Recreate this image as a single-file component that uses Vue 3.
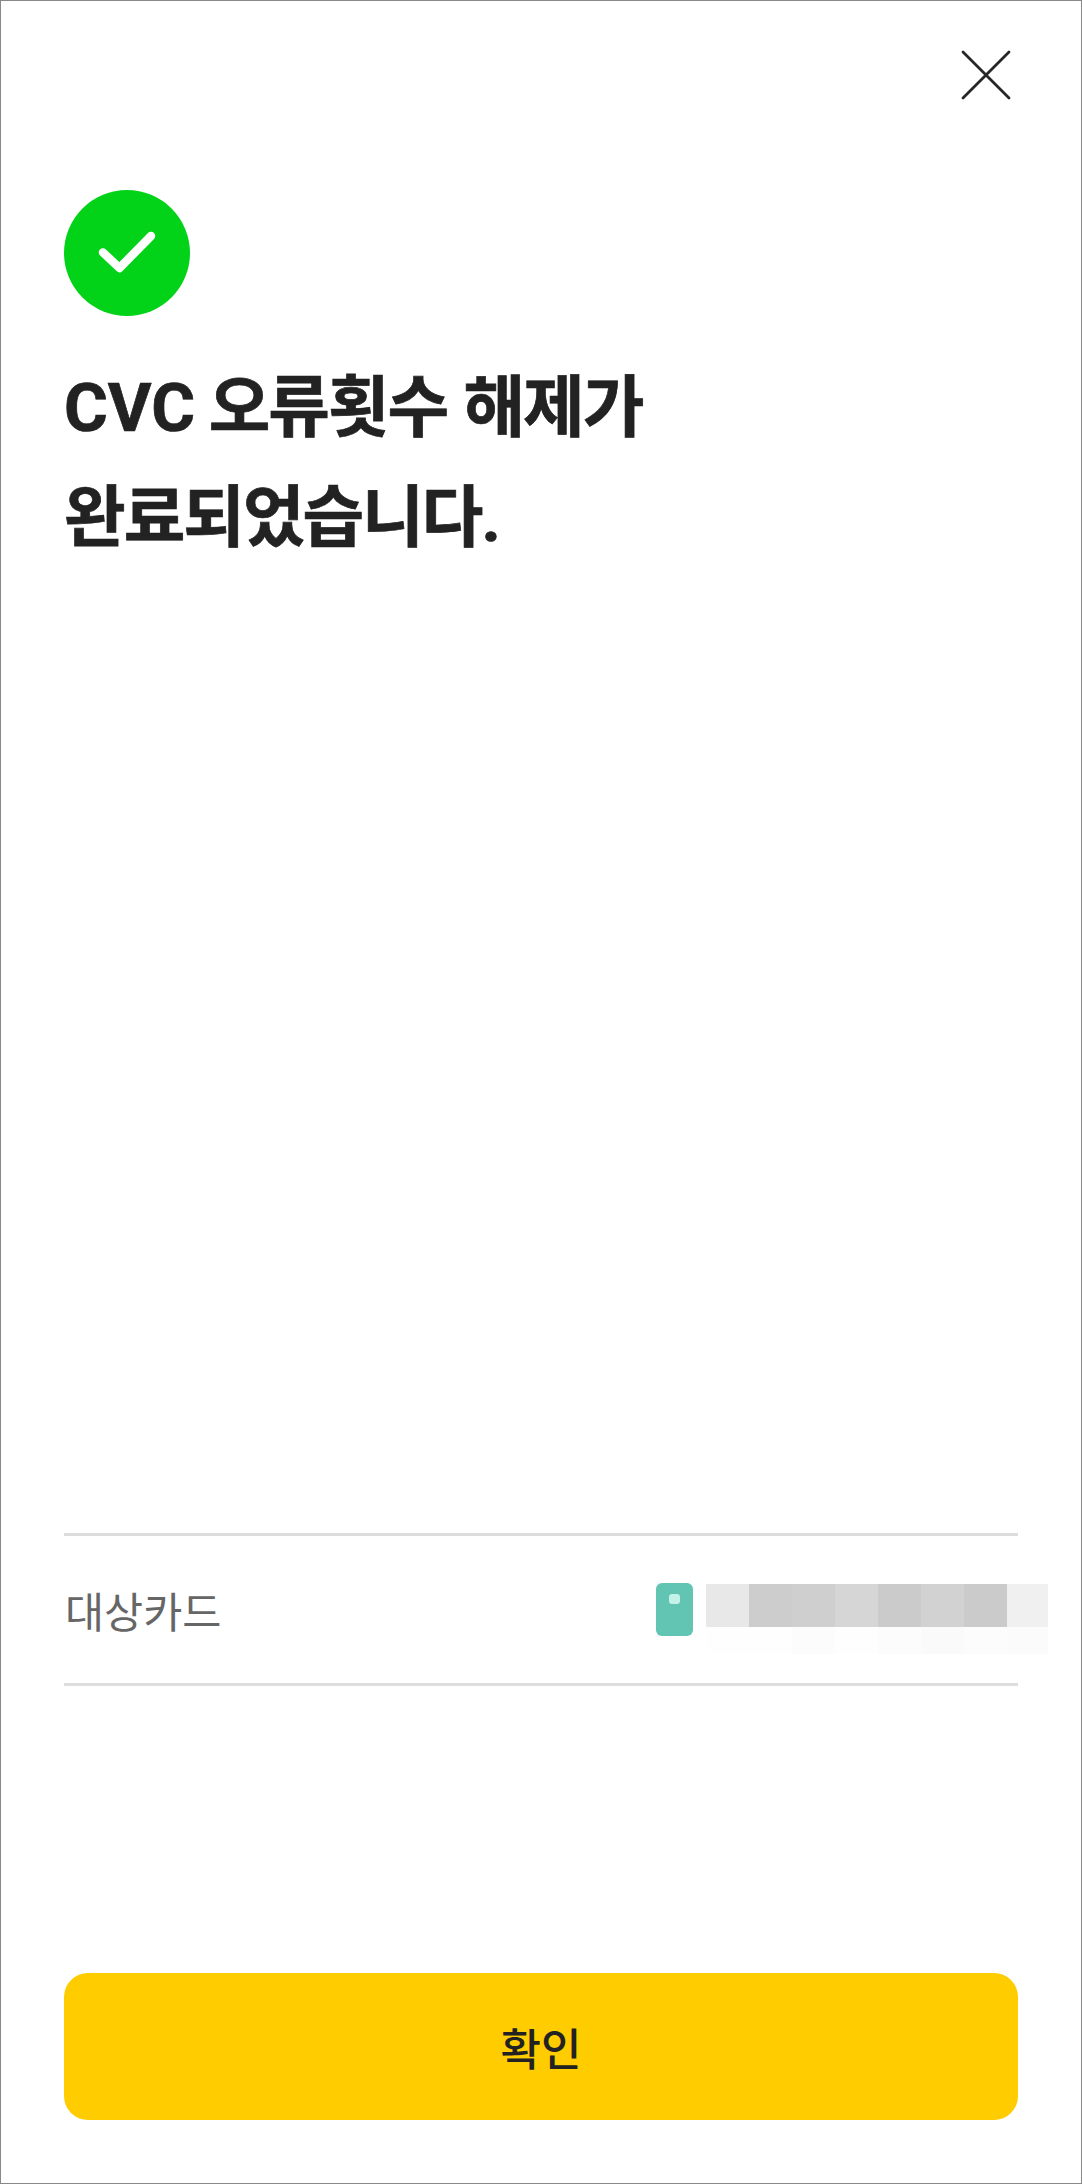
<script setup>
const topCells = ['#e8e8e8', '#cdcdcd', '#cfcfcf', '#d6d6d6', '#cbcbcb', '#d2d2d2', '#cbcbcb', '#f0f0f0']
const bottomCells = ['#fefefe', '#fefefe', '#fcfcfc', '#fefefe', '#fcfcfc', '#fafafa', '#fcfcfc', '#fbfbfb']
</script>

<template>
  <div class="page">
    <header class="top">
      <svg class="close" width="50" height="50" viewBox="0 0 50 50" aria-label="닫기">
        <path d="M2 2 L48 48 M48 2 L2 48" stroke="#262626" stroke-width="2.8" stroke-linecap="round" fill="none" />
      </svg>
    </header>

    <div class="status">
      <svg width="126" height="126" viewBox="0 0 126 126">
        <circle cx="63" cy="63" r="63" fill="#03d318" />
        <path d="M39 62.500 L55.500 78 L87 46" stroke="#fff" stroke-width="8.500" stroke-linecap="round" stroke-linejoin="round" fill="none" />
      </svg>
    </div>

    <h1 class="title">CVC <span class="hangul">오류횟수 해제가</span><br /><span class="hangul">완료되었습니다.</span></h1>

    <div class="spacer"></div>

    <section class="info">
      <span class="label">대상카드</span>
      <div class="card">
        <div class="card-icon"><span class="chip"></span></div>
        <div class="mosaic">
          <div class="mosaic-row top-row">
            <i v-for="(c, i) in topCells" :key="i" :style="{ background: c }"></i>
          </div>
          <div class="mosaic-row bottom-row">
            <i v-for="(c, i) in bottomCells" :key="i" :style="{ background: c }"></i>
          </div>
        </div>
      </div>
    </section>

    <button class="confirm">확인</button>
  </div>
</template>

<style>
html, body { margin: 0; background: #fff; }
</style>

<style scoped>
.page {
  box-sizing: border-box;
  width: 1082px;
  height: 2184px;
  border: 1px solid #888;
  background: #fff;
  display: flex;
  flex-direction: column;
  padding: 49px 63px 63px;
  font-family: Roboto, "Noto Sans CJK KR", sans-serif;
  color: #222;
}
.top { display: flex; justify-content: flex-end; }
.close { display: block; margin-right: 7px; }
.status { margin-top: 90px; height: 126px; }
.status svg { display: block; }
.title {
  margin: 37px 0 0;
  font-size: 67px;
  font-weight: 700;
  line-height: 110px;
  color: #222;
  -webkit-text-stroke: 0.7px #222;
  word-spacing: -3px;
}
.hangul { letter-spacing: -2px; word-spacing: 1.500px; }
.spacer { flex: 1; }
.info {
  box-sizing: border-box;
  height: 153px;
  border-top: 3px solid #ddd;
  border-bottom: 3px solid #ddd;
  display: flex;
  align-items: center;
  justify-content: space-between;
}
.label {
  font-size: 42.500px;
  color: #666;
  margin-left: 1px;
}
.card {
  display: flex;
  align-items: flex-start;
  gap: 13px;
  margin-right: -30px;
  margin-top: 17px;
}
.card-icon {
  width: 37px;
  height: 53px;
  border-radius: 6px;
  background: #62c4b2;
  display: flex;
  justify-content: center;
  padding-top: 11px;
  box-sizing: border-box;
}
.chip {
  width: 11px;
  height: 10px;
  border-radius: 3px;
  background: #c5f2e8;
}
.mosaic { display: flex; flex-direction: column; width: 342px; margin-top: 1px; }
.mosaic-row { display: grid; grid-template-columns: repeat(7, 43px) 41px; }
.top-row { height: 43px; }
.bottom-row { height: 27px; }
.confirm {
  margin-top: 287px;
  height: 147px;
  border: 0;
  border-radius: 24px;
  background: #ffcc00;
  color: #222;
  font-family: inherit;
  font-size: 44px;
  font-weight: 500;
  padding: 0;
}
</style>
